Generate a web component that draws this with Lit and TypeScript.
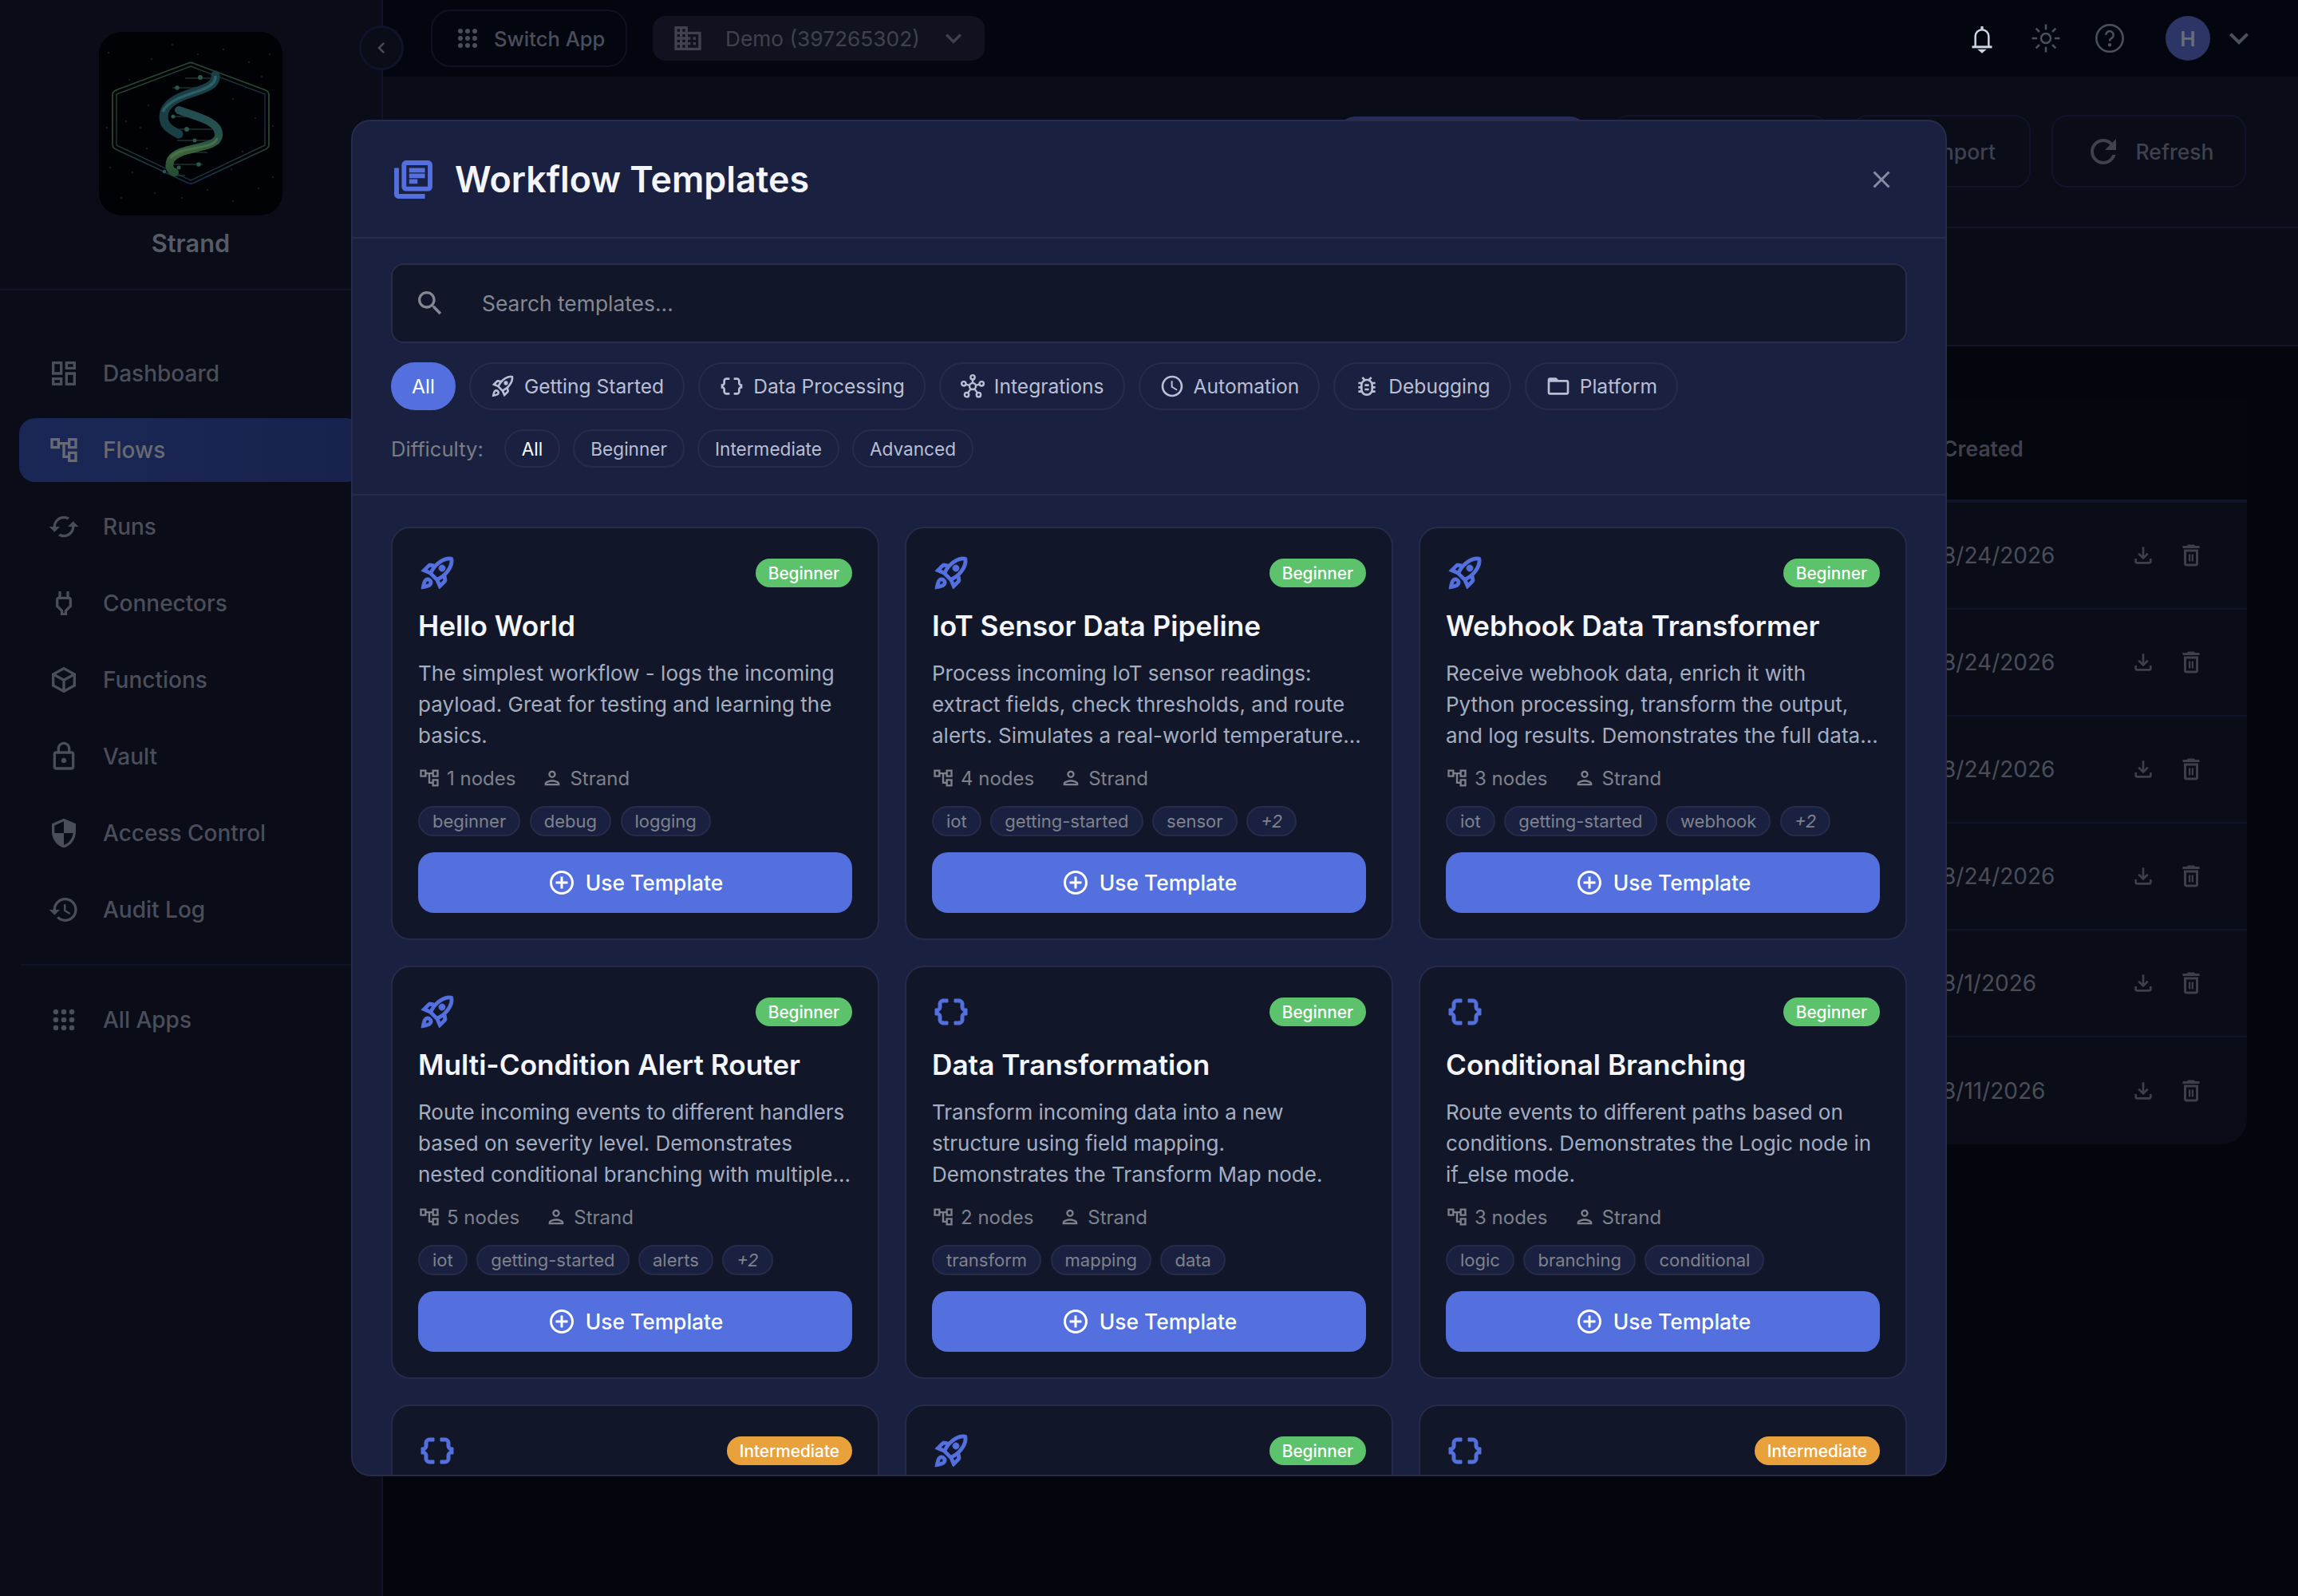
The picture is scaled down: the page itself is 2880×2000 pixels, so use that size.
import { LitElement, html, css, svg } from "lit";
import { customElement } from "lit/decorators.js";

const P: Record<string, string> = {
  search: "M15.5 14h-.79l-.28-.27C15.41 12.59 16 11.11 16 9.5 16 5.91 13.09 3 9.5 3S3 5.91 3 9.5 5.91 16 9.5 16c1.61 0 3.09-.59 4.23-1.57l.27.28v.79l5 4.99L20.49 19l-4.99-5zm-6 0C7.01 14 5 11.99 5 9.5S7.01 5 9.5 5 14 7.01 14 9.5 11.99 14 9.5 14z",
  close: "M19 6.41L17.59 5 12 10.59 6.41 5 5 6.41 10.59 12 5 17.59 6.41 19 12 13.41 17.59 19 19 17.59 13.41 12z",
  dashboard: "M19 5v2h-4V5h4M9 5v6H5V5h4m10 8v6h-4v-6h4M9 17v2H5v-2h4M21 3h-8v6h8V3zM11 3H3v10h8V3zm10 8h-8v10h8V11zm-10 4H3v6h8v-6z",
  tree: "M22 11V3h-7v3H9V3H2v8h7V8h2v10h4v3h7v-8h-7v3h-2V8h2v3h7zM7 9H4V5h3v4zm10 6h3v4h-3v-4zm0-10h3v4h-3V5z",
  cached: "M19 8l-4 4h3c0 3.31-2.69 6-6 6-1.01 0-1.97-.25-2.8-.7l-1.46 1.46C8.97 19.54 10.43 20 12 20c4.42 0 8-3.58 8-8h3l-4-4zM6 12c0-3.31 2.69-6 6-6 1.01 0 1.97.25 2.8.7l1.46-1.46C15.03 4.46 13.57 4 12 4c-4.42 0-8 3.58-8 8H1l4 4 4-4H6z",
  plug: "M16.01 7L16 3h-2v4h-4V3H8v4h-.01C7 6.99 6 7.99 6 8.99v5.49L9.5 18v3h5v-3l3.5-3.51v-5.5c0-1-1-2-1.99-1.99zM16 13.66l-3.5 3.51V19h-1v-1.83L8 13.65V9.01h8v4.65z",
  cube: "M12 2.2l9 5v9.6l-9 5-9-5V7.2l9-5zm0 2.3L6.1 7.8 12 11l5.9-3.2L12 4.5zM5 9.5v6.1l6 3.3v-6.1L5 9.5zm14 0l-6 3.3v6.1l6-3.3V9.5z",
  lock: "M18 8h-1V6c0-2.76-2.24-5-5-5S7 3.24 7 6v2H6c-1.1 0-2 .9-2 2v10c0 1.1.9 2 2 2h12c1.1 0 2-.9 2-2V10c0-1.1-.9-2-2-2zM9 6c0-1.66 1.34-3 3-3s3 1.34 3 3v2H9V6zm9 14H6V10h12v10zm-6-3c1.1 0 2-.9 2-2s-.9-2-2-2-2 .9-2 2 .9 2 2 2z",
  shield: "M12 1L3 5v6c0 5.55 3.84 10.74 9 12 5.16-1.26 9-6.45 9-12V5l-9-4zm0 10.99h7c-.53 4.12-3.28 7.79-7 8.94V12H5V6.3l7-3.11v8.8z",
  history: "M13 3c-4.97 0-9 4.03-9 9H1l3.89 3.89.07.14L9 12H6c0-3.87 3.13-7 7-7s7 3.13 7 7-3.13 7-7 7c-1.93 0-3.68-.79-4.94-2.06l-1.42 1.42C8.27 19.99 10.51 21 13 21c4.97 0 9-4.03 9-9s-4.03-9-9-9zm-1 5v5l4.28 2.54.72-1.21-3.5-2.08V8H12z",
  books: "M4 6H2v14c0 1.1.9 2 2 2h14v-2H4V6zm16-4H8c-1.1 0-2 .9-2 2v12c0 1.1.9 2 2 2h12c1.1 0 2-.9 2-2V4c0-1.1-.9-2-2-2zm0 14H8V4h12v12zM10 9h8v2h-8zm0 3h4v2h-4zm0-6h8v2h-8z",
  rocket: "M6 15c-.83 0-1.58.34-2.12.88C2.7 17.06 2 22 2 22s4.94-.7 6.12-1.88c.54-.54.88-1.29.88-2.12 0-1.66-1.34-3-3-3zm.71 3.71c-.28.28-2.17.76-2.17.76s.47-1.88.76-2.17c.17-.19.42-.3.7-.3.55 0 1 .45 1 1 0 .28-.11.53-.29.71zm10.71-5.06c6.36-6.36 4.24-11.31 4.24-11.31S16.71.22 10.35 6.58l-2.49-.5c-.65-.13-1.33.08-1.81.55L2 10.69l5 2.14L11.17 17l2.14 5 4.05-4.05c.47-.47.68-1.15.55-1.81l-.49-2.49zM7.41 10.83l-1.91-.82 1.97-1.97 1.44.29c-.57.83-1.08 1.7-1.5 2.5zm6.58 7.67l-.82-1.91c.8-.42 1.67-.93 2.49-1.5l.29 1.44-1.96 1.97zM16 12.24c-1.32 1.32-3.38 2.4-4.04 2.73l-2.93-2.93c.32-.65 1.4-2.71 2.73-4.04 4.68-4.68 8.23-3.99 8.23-3.99s.69 3.55-3.99 8.23zM15 11c1.1 0 2-.9 2-2s-.9-2-2-2-2 .9-2 2 .9 2 2 2z",
  data: "M4 7v2c0 .55-.45 1-1 1H2v4h1c.55 0 1 .45 1 1v2c0 1.65 1.35 3 3 3h3v-2H7c-.55 0-1-.45-1-1v-2c0-1.3-.84-2.42-2-2.83v-.34C5.16 11.42 6 10.3 6 9V7c0-.55.45-1 1-1h3V4H7C5.35 4 4 5.35 4 7zm17 3c-.55 0-1-.45-1-1V7c0-1.65-1.35-3-3-3h-3v2h3c.55 0 1 .45 1 1v2c0 1.3.84 2.42 2 2.83v.34c-1.16.41-2 1.52-2 2.83v2c0 .55-.45 1-1 1h-3v2h3c1.65 0 3-1.35 3-3v-2c0-.55.45-1 1-1h1v-4h-1z",
  clock: "M11.99 2C6.47 2 2 6.48 2 12s4.47 10 9.99 10C17.52 22 22 17.52 22 12S17.52 2 11.99 2zM12 20c-4.42 0-8-3.58-8-8s3.58-8 8-8 8 3.58 8 8-3.58 8-8 8zm.5-13H11v6l5.25 3.15.75-1.23-4.5-2.67z",
  bug: "M20 8h-2.81c-.45-.78-1.07-1.45-1.82-1.96L17 4.41 15.59 3l-2.17 2.17C12.96 5.06 12.49 5 12 5s-.96.06-1.41.17L8.41 3 7 4.41l1.62 1.63C7.88 6.55 7.26 7.22 6.81 8H4v2h2.09c-.05.33-.09.66-.09 1v1H4v2h2v1c0 .34.04.67.09 1H4v2h2.81c1.04 1.79 2.97 3 5.19 3s4.15-1.21 5.19-3H20v-2h-2.09c.05-.33.09-.66.09-1v-1h2v-2h-2v-1c0-.34-.04-.67-.09-1H20V8zm-4 7c0 2.21-1.79 4-4 4s-4-1.79-4-4v-4c0-2.21 1.79-4 4-4s4 1.79 4 4v4zm-6-1h4v2h-4zm0-4h4v2h-4z",
  folder: "M20 6h-8l-2-2H4c-1.1 0-1.99.9-1.99 2L2 18c0 1.1.9 2 2 2h16c1.1 0 2-.9 2-2V8c0-1.1-.9-2-2-2zm0 12H4V8h16v10z",
  person: "M12 6c1.1 0 2 .9 2 2s-.9 2-2 2-2-.9-2-2 .9-2 2-2m0 10c2.7 0 5.8 1.29 6 2H6c.23-.72 3.31-2 6-2m0-12C9.79 4 8 5.79 8 8s1.79 4 4 4 4-1.79 4-4-1.79-4-4-4zm0 10c-2.67 0-8 1.34-8 4v2h16v-2c0-2.66-5.33-4-8-4z",
  add: "M13 7h-2v4H7v2h4v4h2v-4h4v-2h-4V7zm-1-5C6.48 2 2 6.48 2 12s4.48 10 10 10 10-4.48 10-10S17.52 2 12 2zm0 18c-4.41 0-8-3.59-8-8s3.59-8 8-8 8 3.59 8 8-3.59 8-8 8z",
  refresh: "M17.65 6.35C16.2 4.9 14.21 4 12 4c-4.42 0-7.99 3.58-7.99 8s3.57 8 7.99 8c3.73 0 6.84-2.55 7.73-6h-2.08c-.82 2.33-3.04 4-5.65 4-3.31 0-6-2.69-6-6s2.69-6 6-6c1.66 0 3.14.69 4.22 1.78L13 11h7V4l-2.35 2.35z",
  download: "M18 15v3H6v-3H4v3c0 1.1.9 2 2 2h12c1.1 0 2-.9 2-2v-3h-2zm-1-4l-1.41-1.41L13 12.17V4h-2v8.17L8.41 9.59 7 11l5 5 5-5z",
  trash: "M6 19c0 1.1.9 2 2 2h8c1.1 0 2-.9 2-2V7H6v12zM8 9h8v10H8V9zm7.5-5l-1-1h-5l-1 1H5v2h14V4zM10 11h1.5v6H10zm2.5 0H14v6h-1.5z",
  building: "M12 7V3H2v18h20V7H12zM6 19H4v-2h2v2zm0-4H4v-2h2v2zm0-4H4V9h2v2zm0-4H4V5h2v2zm4 12H8v-2h2v2zm0-4H8v-2h2v2zm0-4H8V9h2v2zm0-4H8V5h2v2zm10 12h-8v-2h2v-2h-2v-2h2v-2h-2V9h8v10zm-2-8h-2v2h2v-2zm0 4h-2v2h2v-2z",
  down: "M7.41 8.59L12 13.17l4.59-4.58L18 10l-6 6-6-6z",
  left: "M15.41 7.41L14 6l-6 6 6 6 1.41-1.41L10.83 12z",
};

const ico = (name: string, cls: string) =>
  html`<svg class="ico ${cls}" viewBox="0 0 24 24" fill="currentColor"><path d=${P[name]}></path></svg>`;

const dots = (cls: string) => html`<svg class="ico ${cls}" viewBox="0 0 24 24" fill="currentColor">
  ${[6, 12, 18].flatMap((y) => [6, 12, 18].map((x) => svg`<circle cx=${x} cy=${y} r="2"></circle>`))}
</svg>`;

const hub = (cls: string) => html`<svg class="ico ${cls}" viewBox="0 0 24 24" fill="none" stroke="currentColor" stroke-width="1.8">
  <circle cx="12" cy="12" r="3"></circle><circle cx="12" cy="3.6" r="2"></circle>
  <circle cx="3.6" cy="9.6" r="2"></circle><circle cx="20.4" cy="9.6" r="2"></circle>
  <circle cx="6.4" cy="20" r="2"></circle><circle cx="17.6" cy="20" r="2"></circle>
  <path d="M12 5.6V9M5.5 10.2l3.6 1M18.5 10.2l-3.6 1M7.5 18.3l2.7-3.8M16.5 18.3l-2.7-3.8"></path>
</svg>`;

const STARS = [
  [12, 26],[38, 60],[66, 34],[92, 16],[124, 28],[156, 22],[188, 38],[214, 28],[22, 74],[204, 56],[10, 120],[34, 112],[60, 146],[196, 108],[218, 118],[14, 170],[42, 176],[70, 202],[104, 208],[136, 198],[168, 212],[200, 196],[218, 182],[28, 208],[62, 92],[168, 84],[150, 140],[180, 150],[52, 120],[184, 70],[96, 150],[166, 172],
];

const logo = html`<svg class="logo" viewBox="0 0 230 230">
  <defs>
    <linearGradient id="hex" x1="0" y1="0" x2="1" y2="1">
      <stop offset="0" stop-color="#2b4a2a"></stop><stop offset=".45" stop-color="#1a3536"></stop><stop offset=".7" stop-color="#162c48"></stop><stop offset="1" stop-color="#2c4628"></stop>
    </linearGradient>
    <linearGradient id="hexb" x1="0" y1="0" x2="0" y2="1">
      <stop offset="0" stop-color="#284630"></stop><stop offset=".6" stop-color="#2a462a"></stop><stop offset="1" stop-color="#162c46"></stop>
    </linearGradient>
    <linearGradient id="rib" x1="0" y1="0" x2="0" y2="1">
      <stop offset="0" stop-color="#234c50"></stop><stop offset=".45" stop-color="#28524c"></stop><stop offset=".7" stop-color="#3a623a"></stop><stop offset="1" stop-color="#264e34"></stop>
    </linearGradient>
  </defs>
  <rect width="230" height="230" rx="28" fill="#000206"></rect>
  ${STARS.map(([x, y]) => svg`<circle cx=${x} cy=${y} r=".9" fill="#232a36"></circle>`)}
  <path d="M111 39.5 Q115 37.5 119 39.5 L209 73 Q213 75 213 79 V141 Q213 145 209 147 L119 189 Q115 191 111 189 L21 147 Q17 145 17 141 V79 Q17 75 21 73 Z" fill="none" stroke="url(#hexb)" stroke-width="1.8"></path>
  <path d="M115 43 L208 78 V142 L115 186 L22 142 V78 Z" fill="none" stroke="url(#hex)" stroke-width="1.4"></path>
  <g stroke="#2a4842" stroke-width="1.1">
    <path d="M108 58H146M92 70H132M90 106H128M86 122H142M98 136H144M110 151H136M88 166H130M92 180H108"></path>
  </g>
  <g fill="#285850">
    <circle cx="127" cy="57" r="3"></circle><circle cx="98" cy="70" r="2.8"></circle><circle cx="93" cy="106" r="2.5"></circle><circle cx="110" cy="122" r="3"></circle><circle cx="120" cy="136" r="2.5"></circle><circle cx="125" cy="166" r="2.8"></circle><circle cx="100" cy="170" r="2.5"></circle><circle cx="82" cy="175" r="2.2"></circle>
  </g>
  <path d="M146 54 C150 78 92 72 82 100 C78 116 88 122 100 128" fill="none" stroke="#1a3e44" stroke-width="11" stroke-linecap="round"></path>
  <path d="M100 98 C122 106 152 112 150 130 C148 148 102 142 90 160 C86 170 90 174 95 176" fill="none" stroke="url(#rib)" stroke-width="10" stroke-linecap="round"></path>
  <path d="M146 55 C148 78 92 74 80 100" fill="none" stroke="#2c6066" stroke-width="3.5"></path>
  <path d="M148 133 C146 148 102 142 90 158" fill="none" stroke="#4a7046" stroke-width="3"></path>
</svg>`;

interface Card { icon: string; level: string; title?: string; desc?: string; nodes?: number; tags?: string[]; }

const CARDS: Card[] = [
  { icon: "rocket", level: "Beginner", title: "Hello World", desc: "The simplest workflow - logs the incoming payload. Great for testing and learning the basics.", nodes: 1, tags: ["beginner", "debug", "logging"] },
  { icon: "rocket", level: "Beginner", title: "IoT Sensor Data Pipeline", desc: "Process incoming IoT sensor readings: extract fields, check thresholds, and route alerts. Simulates a real-world temperature monitoring scenario.", nodes: 4, tags: ["iot", "getting-started", "sensor", "+2"] },
  { icon: "rocket", level: "Beginner", title: "Webhook Data Transformer", desc: "Receive webhook data, enrich it with Python processing, transform the output, and log results. Demonstrates the full data flow.", nodes: 3, tags: ["iot", "getting-started", "webhook", "+2"] },
  { icon: "rocket", level: "Beginner", title: "Multi-Condition Alert Router", desc: "Route incoming events to different handlers based on severity level. Demonstrates nested conditional branching with multiple logic nodes.", nodes: 5, tags: ["iot", "getting-started", "alerts", "+2"] },
  { icon: "data", level: "Beginner", title: "Data Transformation", desc: "Transform incoming data into a new structure using field mapping. Demonstrates the Transform Map node.", nodes: 2, tags: ["transform", "mapping", "data"] },
  { icon: "data", level: "Beginner", title: "Conditional Branching", desc: "Route events to different paths based on conditions. Demonstrates the Logic node in if_else mode.", nodes: 3, tags: ["logic", "branching", "conditional"] },
  { icon: "data", level: "Intermediate" },
  { icon: "rocket", level: "Beginner" },
  { icon: "data", level: "Intermediate" },
];

const NAV = [
  ["dashboard", "Dashboard"], ["tree", "Flows"], ["cached", "Runs"], ["plug", "Connectors"],
  ["cube", "Functions"], ["lock", "Vault"], ["shield", "Access Control"], ["history", "Audit Log"],
];
const DATES = ["8/24/2026", "8/24/2026", "8/24/2026", "8/24/2026", "8/1/2026", "8/11/2026"];

@customElement("app-root")
export class AppRoot extends LitElement {
  static styles = css`
    :host { display: block; width: 2880px; height: 2000px; position: relative; overflow: hidden; background: #04060d; font-family: Inter, "Liberation Sans", sans-serif; }
    * { box-sizing: border-box; }
    .ico { display: block; flex: none; }
    .thick path { stroke: currentColor; stroke-width: .5; }
    .s28 { width: 28px; height: 28px; } .s32 { width: 32px; height: 32px; } .s34 { width: 34px; height: 34px; }
    .s36 { width: 36px; height: 36px; } .s40 { width: 40px; height: 40px; } .s48 { width: 48px; height: 48px; } .s56 { width: 56px; height: 56px; }
    .shell { display: flex; width: 2880px; height: 2000px; }

    .side { width: 480px; flex: none; background: #0a0c18; border-right: 2px solid #10132a; display: flex; flex-direction: column; }
    .brand { height: 364px; padding-top: 40px; border-bottom: 2px solid #10132a; display: flex; flex-direction: column; align-items: center; }
    .logo { width: 230px; height: 230px; display: block; }
    .brand-name { margin-top: 16px; font-size: 30.8px; line-height: 38px; font-weight: 600; color: #575b65; }
    .nav { padding: 64px 24px 0; display: flex; flex-direction: column; gap: 16px; }
    .nav-b { padding: 1px 24px 0; }
    .nav-item { height: 80px; border-radius: 20px; padding-left: 36px; display: flex; align-items: center; gap: 29px; color: #4a4e5a; font-size: 28px; font-weight: 500; }
    .nav-item.active { background: linear-gradient(90deg, #1a2756, #18224e); color: #686b72; }
    .nav-sep { height: 2px; background: #10142a; margin: 28px 26px 27px; }

    .main { flex: 1; min-width: 0; display: flex; flex-direction: column; }
    .top { height: 96px; background: #04060f; display: flex; align-items: center; padding-left: 60px; position: relative; }
    .switch { width: 246px; height: 72px; border: 2px solid #0e1122; border-radius: 24px; display: flex; align-items: center; gap: 15px; padding-left: 26px; color: #4a4e5a; font-size: 25.6px; font-weight: 500; white-space: nowrap; }
    .demo { margin-left: 32px; width: 416px; height: 56px; background: #10131f; border-radius: 16px; display: flex; align-items: center; padding-left: 24px; gap: 27px; color: #3f424e; font-size: 26.3px; white-space: nowrap; }
    .demo .ico:last-child { margin-left: -5px; }
    .top-right { margin-left: auto; display: flex; align-items: center; }
    .bell { color: #cdd5e5; margin-right: 40px; }
    .sun { color: #4c505b; margin-right: 40px; }
    .help { color: #4c505b; margin-right: 50px; }
    .avatar { width: 56px; height: 56px; border-radius: 50%; background: #2c3566; color: #6a6d74; font-size: 26px; font-weight: 600; display: flex; align-items: center; justify-content: center; margin-right: 12px; }
    .chev { color: #4c505b; margin-right: 50px; }
    .collapse { position: absolute; left: -30px; top: 32px; width: 56px; height: 56px; border-radius: 50%; background: #0a0c18; border: 3px solid #10132a; display: flex; align-items: center; justify-content: center; color: #4c505b; }

    .page-head { height: 190px; background: #0a0c17; border-bottom: 2px solid #10132a; display: flex; justify-content: flex-end; gap: 26px; padding: 48px 65px 0 0; }
    .act { height: 91px; border: 2px solid #10132a; border-radius: 20px; display: flex; align-items: center; justify-content: center; gap: 17px; color: #3f424e; font-size: 26.5px; font-weight: 500; }
    .act.primary { width: 310px; height: 89px; margin-top: 2px; background: #252d5c; border: 0; margin-right: 7px; }
    .act.tpl { width: 270px; margin-right: 4px; } .act.imp { width: 224px; } .act.ref { width: 244px; }
    .filters { height: 148px; background: #090b15; border-bottom: 2px solid #10132a; }
    .table { margin: 64px 64px 0; border-radius: 0 0 32px 32px; overflow: hidden; }
    .row { display: grid; grid-template-columns: 1fr 222px 60px 60px 40px; align-items: center; }
    .thead { height: 132px; background: #05070f; border-bottom: 4px solid #10132a; color: #3e414d; font-size: 26.5px; font-weight: 600; }
    .trow { height: 134px; background: #0a0d18; border-bottom: 2px solid #10142a; color: #4a4d58; font-size: 28px; }
    .trow:last-child { border-bottom: 0; }
    .cell-ico { display: flex; justify-content: center; color: #3d404b; }

    .modal { position: absolute; left: 440px; top: 150px; width: 2000px; height: 1700px; background: #1a2140; border: 2px solid #2a2a4a; border-radius: 24px; display: flex; flex-direction: column; overflow: hidden; }
    .m-head { height: 147px; flex: none; border-bottom: 2px solid #2a2a4a; display: flex; align-items: center; padding: 0 48px 0 48px; gap: 24px; color: #5470de; }
    .m-title { font-size: 44.8px; font-weight: 600; color: #f3f5fa; flex: 1; }
    .m-close { color: #868ba6; margin-right: 14px; }
    .m-filters { flex: none; height: 322px; padding: 31px 48px 0; border-bottom: 2px solid #2a2a4a; }
    .search { height: 100px; background: #111729; border: 2px solid #2a2a4a; border-radius: 16px; display: flex; align-items: center; padding-left: 27px; gap: 45px; color: #858892; font-size: 26.4px; }
    .chips { display: flex; gap: 17px; margin-top: 24px; }
    .chip { height: 60px; border: 2px solid #2a2a4a; border-radius: 30px; padding: 0 24px; display: flex; align-items: center; gap: 11px; color: #b9bfd4; font-size: 24.6px; }
    .chip.on { background: #5470de; border-color: #5470de; color: #fff; }
    .diff { display: flex; align-items: center; gap: 16px; margin-top: 24px; }
    .diff-label { font-size: 25.6px; color: #7a7d86; margin-right: 10px; }
    .pill { height: 48px; border: 2px solid #2a2a4a; border-radius: 24px; padding: 0 20px; display: flex; align-items: center; color: #b9bfd4; font-size: 22.6px; }
    .pill.on { color: #fff; }
    .m-body { flex: 1; min-height: 0; overflow: hidden; padding: 39px 48px 0; }
    .grid { display: grid; grid-template-columns: repeat(3, 1fr); gap: 32px; }
    .card { background: #111729; border: 2px solid #272a49; border-radius: 24px; padding: 32px; height: 518px; display: flex; flex-direction: column; }
    .c-top { display: flex; justify-content: space-between; align-items: center; height: 48px; color: #5470de; }
    .badge { height: 36px; border-radius: 18px; padding: 0 16px; display: flex; align-items: center; color: #fff; font-size: 20.8px; font-weight: 500; }
    .badge.Beginner { background: #5cc26c; } .badge.Intermediate { background: #e9a23b; }
    .c-title { margin-top: 20px; font-size: 35.2px; line-height: 44px; font-weight: 600; color: #f4f6fb; }
    .c-desc { margin-top: 18px; height: 117px; font-size: 26px; line-height: 39px; color: #a5adc0; display: -webkit-box; -webkit-box-orient: vertical; -webkit-line-clamp: 3; overflow: hidden; }
    .c-meta { margin-top: 18px; height: 32px; display: flex; align-items: center; gap: 8px; color: #7f828c; font-size: 24px; }
    .c-meta .author { margin-left: 16px; }
    .tags { margin-top: 19px; display: flex; gap: 11.5px; }
    .tag { height: 38px; border: 2px solid #272a49; background: #1a2140; border-radius: 19px; padding: 0 16px; display: flex; align-items: center; color: #7f828c; font-size: 22px; }
    .tag.more { font-style: italic; }
    .use { margin-top: 20px; height: 76px; background: #5470de; border-radius: 20px; display: flex; align-items: center; justify-content: center; gap: 12px; color: #fff; font-size: 26.4px; font-weight: 500; flex: none; }
  `;

  private card(c: Card) {
    return html`<div class="card">
      <div class="c-top">${ico(c.icon, "s48 thick")}<span class="badge ${c.level}">${c.level}</span></div>
      ${c.title
        ? html`<div class="c-title">${c.title}</div>
            <div class="c-desc">${c.desc}</div>
            <div class="c-meta">${ico("tree", "s28")}<span>${c.nodes} nodes</span><span class="author"></span>${ico("person", "s28")}<span>Strand</span></div>
            <div class="tags">${c.tags!.map((t) => html`<span class="tag ${t.startsWith("+") ? "more" : ""}">${t}</span>`)}</div>
            <div class="use">${ico("add", "s36")}<span>Use Template</span></div>`
        : ""}
    </div>`;
  }

  render() {
    return html`<div class="shell">
      <aside class="side">
        <div class="brand">${logo}<div class="brand-name">Strand</div></div>
        <nav class="nav">
          ${NAV.map(([i, t]) => html`<div class="nav-item ${t === "Flows" ? "active" : ""}">${ico(i, "s40")}<span>${t}</span></div>`)}
        </nav>
        <div class="nav-sep"></div>
        <div class="nav-b"><div class="nav-item">${dots("s40")}<span>All Apps</span></div></div>
      </aside>
      <main class="main">
        <header class="top">
          <div class="collapse">${ico("left", "s28")}</div>
          <div class="switch">${dots("s36")}<span>Switch App</span></div>
          <div class="demo">${ico("building", "s40")}<span>Demo (397265302)</span>${ico("down", "s40")}</div>
          <div class="top-right">
            <svg class="ico s40 bell" viewBox="0 0 24 24" fill="none" stroke="currentColor" stroke-width="1.5">
              <path d="M7 18V10.5a5 5 0 0 1 10 0V18"></path><path d="M4.5 18.5h15" stroke-width="1.8"></path><path d="M12 3v2.2" stroke-width="2"></path><path d="M10.6 21h2.8l-1.4 1.2z" fill="currentColor"></path>
            </svg>
            <svg class="ico s40 sun" viewBox="0 0 24 24" fill="none" stroke="currentColor" stroke-width="1.5">
              <circle cx="12" cy="12" r="3.6"></circle><path d="M12 1.5v4M12 18.5v4M1.5 12h4M18.5 12h4M4.6 4.6l2.6 2.6M16.8 16.8l2.6 2.6M4.6 19.4l2.6-2.6M16.8 7.2l2.6-2.6"></path>
            </svg>
            <svg class="ico s40 help" viewBox="0 0 24 24" fill="none" stroke="currentColor" stroke-width="1.5">
              <circle cx="12" cy="12" r="10"></circle><path d="M9.2 9.4a2.8 2.8 0 1 1 4.2 2.5c-.9.5-1.4 1.1-1.4 2.2"></path><circle cx="12" cy="17" r=".6" fill="currentColor"></circle>
            </svg>
            <div class="avatar">H</div>
            ${ico("down", "s48 chev")}
          </div>
        </header>
        <div class="page-head">
          <div class="act primary"></div>
          <div class="act tpl"></div>
          <div class="act imp">${ico("download", "s36")}<span>Import</span></div>
          <div class="act ref">${ico("refresh", "s48")}<span>Refresh</span></div>
        </div>
        <div class="filters"></div>
        <div class="table">
          <div class="row thead"><span></span><span>Created</span><span></span><span></span><span></span></div>
          ${DATES.map((d) => html`<div class="row trow"><span></span><span>${d}</span>
            <span class="cell-ico">${ico("download", "s32")}</span><span class="cell-ico">${ico("trash", "s36")}</span><span></span></div>`)}
        </div>
      </main>
    </div>
    <section class="modal">
      <div class="m-head">${ico("books", "s56 thick")}<div class="m-title">Workflow Templates</div><span class="m-close">${ico("close", "s36")}</span></div>
      <div class="m-filters">
        <div class="search">${ico("search", "s40")}<span>Search templates...</span></div>
        <div class="chips">
          <div class="chip on"><span>All</span></div>
          <div class="chip">${ico("rocket", "s32")}<span>Getting Started</span></div>
          <div class="chip">${ico("data", "s32")}<span>Data Processing</span></div>
          <div class="chip">${hub("s32")}<span>Integrations</span></div>
          <div class="chip">${ico("clock", "s32")}<span>Automation</span></div>
          <div class="chip">${ico("bug", "s32")}<span>Debugging</span></div>
          <div class="chip">${ico("folder", "s32")}<span>Platform</span></div>
        </div>
        <div class="diff">
          <span class="diff-label">Difficulty:</span>
          <div class="pill on">All</div><div class="pill">Beginner</div><div class="pill">Intermediate</div><div class="pill">Advanced</div>
        </div>
      </div>
      <div class="m-body"><div class="grid">${CARDS.map((c) => this.card(c))}</div></div>
    </section>`;
  }
}
